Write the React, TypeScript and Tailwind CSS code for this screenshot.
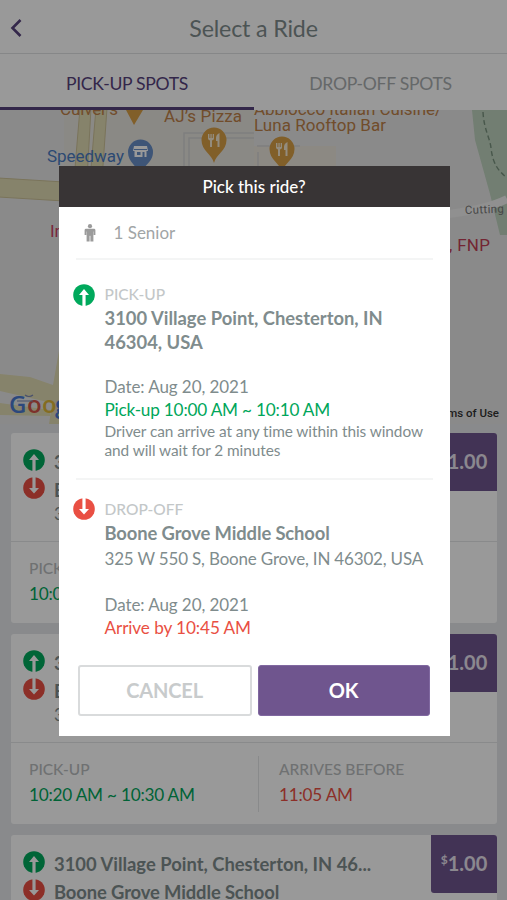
type Direction = "up" | "down"

const rides = [
  { id: 1, pickup: "10:00 AM ~ 10:10 AM", arrives: "10:45 AM" },
  { id: 2, pickup: "10:20 AM ~ 10:30 AM", arrives: "11:05 AM" },
  { id: 3, pickup: "10:40 AM ~ 10:50 AM", arrives: "11:25 AM" },
]

function StopIcon({ direction }: { direction: Direction }) {
  const up = direction === "up"
  return (
    <svg viewBox="0 0 22 22" className="h-[22px] w-[22px] shrink-0">
      <circle cx="11" cy="11" r="10.8" fill={up ? "#00a95c" : "#e94f43"} />
      <path
        d={up ? "M11 5 L16 11 H12.6 V22 H9.4 V11 H6 Z" : "M11 16.6 L16 11 H12.6 V0 H9.4 V11 H6 Z"}
        fill="#fff"
      />
    </svg>
  )
}

function PersonIcon() {
  return (
    <svg viewBox="0 0 12 18" className="h-[18px] w-3" fill="#9b9b9b">
      <circle cx="6" cy="2.2" r="2.1" />
      <path d="M2 4.8h8a1.4 1.4 0 0 1 1.4 1.4v4.8H9.7V7.4h-.3V17.4H6.4v-5.6h-.8v5.6H2.6V7.400h-.3v3.600H.6V6.200A1.4 1.4 0 0 1 2 4.800Z" />
    </svg>
  )
}

function FoodPin({ x, y }: { x: number; y: number }) {
  return (
    <g transform={`translate(${x} ${y})`}>
      <path d="M0 23 C-2 14 -12.5 11 -12.5 0 A12.5 12.5 0 0 1 12.5 0 C12.5 11 2 14 0 23Z" fill="#d89e45" />
      <path
        d="M-6 -6v4.5q0 1.5 2 2V7h2V.5q2-.5 2-2V-6h-1.3v4h-1v-4h-1.300v4h-1v-4ZM5.500-7q-3.500 1.500-3.500 5v3h1.500v6H5.500Z"
        fill="#f5e9d2"
      />
    </g>
  )
}

function RideMap() {
  return (
    <svg viewBox="0 0 507 314" className="block h-[314px] w-full bg-[#e7e7e7] font-[Roboto,sans-serif]">
      <rect x="64" y="0" width="190" height="90" fill="#e7e4de" />
      <rect x="254" y="36" width="82" height="40" fill="#e9e5da" />
      {/* Roads */}
      <g fill="#e0dab2" stroke="#cbc197" strokeWidth="1">
        <path d="M80 -2 H91 L87 70 H74Z" />
        <path d="M96 -2 H107 L102 70 H90Z" />
        <path d="M-2 68 L64 72 V91 L-2 87Z" />
      </g>
      <g fill="#e0dab2">
        <path d="M0 264 L30 267 L53 275 L60 235 L60 314 H49 L52 293 L0 281Z" />
        <path d="M0 293 L50 300 V306 L0 305Z" />
      </g>
      <g fill="none" stroke="#d3d3d3" strokeWidth="1.5">
        <path d="M184 70 V23 H254" />
        <path d="M189 70 V28 H254" />
        <path d="M257 36 H300 M258 42 V70" />
      </g>
      <path d="M472 0 H507 V125 H500 L490 84 L475 30Z" fill="#bed2be" />
      <path d="M440 105 Q485 100 507 89" fill="none" stroke="#f0f0f0" strokeWidth="8" />
      <path
        d="M483 2 C484 20 490 28 491 38 C493 56 500 62 507 68"
        fill="none"
        stroke="#78917d"
        strokeWidth="1.4"
        strokeDasharray="5 3"
      />
      {/* Places */}
      <path d="M126 0 H143 L134 15Z" fill="#d89e45" />
      <FoodPin x={214} y={30} />
      <FoodPin x={282} y={39} />
      <path d="M140 65 C138 56 128 53 128 42 A12.5 12.5 0 0 1 153 42 C153 53 142 56 140 65Z" fill="#688ec7" />
      <path d="M134 36h13l1 5h-1.500v6h-12v-6H133Z" fill="#fff" />
      <path d="M137 42h3.500v3H137ZM142.500 42h2v5h-2ZM134 39h13v1h-13Z" fill="#688ec7" />
      <g fill="#bd8048" fontSize="17">
        <text x="60" y="5" textLength="58">Culver’s</text>
        <text x="164" y="12" textLength="78">AJ’s Pizza</text>
        <text x="254" y="5" textLength="188">Abbiocco Italian Cuisine/</text>
        <text x="254" y="21" textLength="132">Luna Rooftop Bar</text>
      </g>
      <text x="47" y="52" textLength="77" fontSize="17" fill="#4a7bc0">Speedway</text>
      <text x="50" y="127" fontSize="17" fill="#c94165">Inspire</text>
      <text x="449" y="141" textLength="41" fontSize="17" fill="#c03e55">, FNP</text>
      <text x="465" y="104" fontSize="11.500" textLength="39" fill="#777" transform="rotate(-2 465 104)">Cutting</text>
      <text x="499" y="307" fontSize="11.500" textAnchor="end" fill="#333" fontWeight="500">Terms of Use</text>
      <g className="font-['Open_Sans',sans-serif] font-semibold" fontSize="24">
        <text x="9" y="303" fill="#4a78cf">G</text>
        <text x="27" y="303" fill="#d05248">o</text>
        <text x="42" y="303" fill="#ddb53a">o</text>
        <text x="55" y="303" fill="#4a78cf">g</text>
      </g>
      <path d="M17 291 H33 M25 285 Q29 288 33 285" fill="none" stroke="#7785b5" strokeWidth="1.2" />
    </svg>
  )
}

function RideCard({ pickup, arrives }: { pickup: string; arrives: string }) {
  return (
    <div className="h-[190px] shrink-0 overflow-hidden rounded-[3px] bg-white">
      <div className="flex h-[109px] border-b border-[#e4e6e8]">
        <div className="min-w-0 flex-1 pt-[16px] pl-3">
          <div className="flex h-7 items-start gap-[9px] text-[18.4px] leading-[27px] font-bold text-[#7f8c8d]">
            <StopIcon direction="up" />
            <span className="whitespace-nowrap">3100 Village Point, Chesterton, IN 46...</span>
          </div>
          <div className="flex h-7 items-start gap-[9px] text-[18.4px] leading-[26px] font-bold tracking-[-0.12px] text-[#7f8c8d]">
            <StopIcon direction="down" />
            <span>Boone Grove Middle School</span>
          </div>
          <p className="pl-[31px] text-[17px] leading-[18px] tracking-[-0.18px] whitespace-nowrap text-[#7f8c8d]">
            325 W 550 S, Boone Grove, IN 46302, USA
          </p>
        </div>
        <div className="flex h-[58px] w-[66px] justify-center rounded-bl-[3px] bg-[#6f558e] pt-[14px] text-[#e8e3ee]">
          <span className="pt-[3px] text-[12px] leading-4 font-bold">$</span>
          <span className="text-[20px] leading-[29px] font-bold">1.00</span>
        </div>
      </div>
      <div className="flex pt-[13px] text-[17.2px] tracking-[-0.22px]">
        <div className="h-[56px] w-[248px] border-r border-[#e4e6e8] pl-[18px]">
          <div className="text-[15.5px] leading-[26px] font-medium tracking-normal text-[#b9bcbe]">PICK-UP</div>
          <div className="leading-[26px] text-[#00a65a]">{pickup}</div>
        </div>
        <div className="pl-[20px]">
          <div className="text-[15.5px] leading-[26px] font-medium tracking-normal text-[#b9bcbe]">ARRIVES BEFORE</div>
          <div className="leading-[26px] text-[#e94f43]">{arrives}</div>
        </div>
      </div>
    </div>
  )
}

function RideDialog() {
  return (
    <div className="absolute inset-0 flex items-start bg-black/40 pt-[166px] pl-[58.5px]">
      <div className="h-[570px] w-[391px] bg-white text-[#7f8c8d]">
        <div className="h-[41px] bg-[#383435] text-center text-[17px] leading-[41px] font-medium text-white">
          Pick this ride?
        </div>
        <div className="mx-[17px] flex h-[53px] items-center gap-[18px] border-b-2 border-[#f4f5f5] pl-[8px] text-[17px] text-[#a1a5a6]">
          <PersonIcon />
          <span>1 Senior</span>
        </div>

        <div className="mx-[17px] h-[219.500px] border-b-2 border-[#f4f5f5] pt-[23px]">
          <div className="-ml-[3px] flex gap-[10px]">
            <div className="pt-[1px]">
              <StopIcon direction="up" />
            </div>
            <div className="whitespace-nowrap">
              <div className="text-[15.5px] leading-[22px] font-medium text-[#c3c7c8]">PICK-UP</div>
              <div className="pt-[1px] text-[18.4px] leading-[24px] font-bold">
                3100 Village Point, Chesterton, IN
                <br />
                46304, USA
              </div>
              <div className="mt-[21px] text-[17px] leading-[23px] tracking-[-0.07px]">Date: Aug 20, 2021</div>
              <div className="text-[17.2px] leading-[24px] tracking-[-0.2px] text-[#00a65a]">
                Pick-up 10:00 AM ~ 10:10 AM
              </div>
              <div className="text-[15.4px] leading-[18.5px] tracking-[-0.07px]">
                Driver can arrive at any time within this window
                <br />
                and will wait for 2 minutes
              </div>
            </div>
          </div>
        </div>

        <div className="mx-[17px] h-[185px] pt-[18px]">
          <div className="-ml-[3px] flex gap-[10px]">
            <div>
              <StopIcon direction="down" />
            </div>
            <div className="whitespace-nowrap">
              <div className="text-[15.5px] leading-[22px] font-medium text-[#c3c7c8]">DROP-OFF</div>
              <div className="text-[18.4px] leading-[26px] font-bold tracking-[-0.12px]">Boone Grove Middle School</div>
              <div className="text-[17px] leading-[26px] tracking-[-0.18px]">325 W 550 S, Boone Grove, IN 46302, USA</div>
              <div className="mt-[21px] text-[17px] leading-[23px] tracking-[-0.07px]">Date: Aug 20, 2021</div>
              <div className="text-[17.2px] leading-[23px] tracking-[-0.1px] text-[#e94f43]">Arrive by 10:45 AM</div>
            </div>
          </div>
        </div>

        <div className="flex gap-[6px] px-[19px] text-[20px] font-bold">
          <button className="h-[51px] w-[174px] rounded-[3px] border-2 border-[#d9dbdc] tracking-[-0.15px] text-[#c8cbcc]">
            CANCEL
          </button>
          <button className="h-[51px] w-[172px] rounded-[3px] border border-[#8068a0] bg-[#6f558e] tracking-[-0.3px] text-white">
            OK
          </button>
        </div>
      </div>
    </div>
  )
}

export default function App() {
  return (
    <div className="relative h-[900px] w-[507px] overflow-hidden bg-[#e4e7ea] font-[Lato,sans-serif] [font-variant-ligatures:none]">
      <header className="relative flex h-[54px] items-center justify-center border-b border-[#dfe1e3] bg-white pt-[3px]">
        <svg viewBox="0 0 12 20" className="absolute top-[18px] left-[10px] h-5 w-3">
          <path d="M10.500 2 L2.500 10 L10.500 18" fill="none" stroke="#56417c" strokeWidth="2.6" />
        </svg>
        <h1 className="text-[23.2px] tracking-[-0.15px] text-[#7f8c8d]">Select a Ride</h1>
      </header>
      <nav className="flex h-[56px] bg-white text-[17.6px] leading-[60px] tracking-[-0.3px]">
        <div className="w-[254px] border-b-[3px] border-[#56417c] text-center text-[#56417c]">PICK-UP SPOTS</div>
        <div className="w-[253px] text-center text-[#a9adaf]">DROP-OFF SPOTS</div>
      </nav>
      <RideMap />
      <main className="flex flex-col gap-[11px] pt-[9px] pr-[10px] pl-[11px]">
        {rides.map((ride) => (
          <RideCard key={ride.id} pickup={ride.pickup} arrives={ride.arrives} />
        ))}
      </main>
      <RideDialog />
    </div>
  )
}
